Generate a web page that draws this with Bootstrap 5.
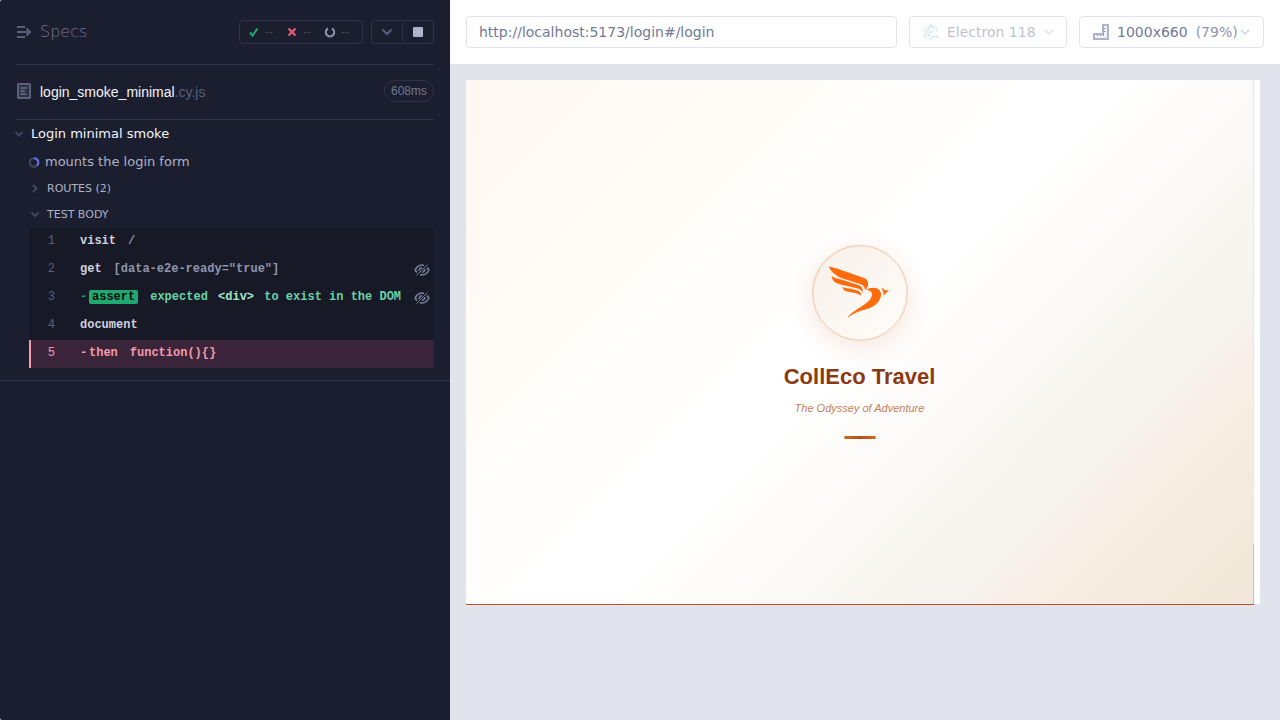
<!DOCTYPE html>
<html lang="en">
<head>
<meta charset="utf-8">
<meta name="viewport" content="width=device-width, initial-scale=1">
<title>login_smoke_minimal.cy.js</title>
<link href="https://cdn.jsdelivr.net/npm/bootstrap@5.3.0/dist/css/bootstrap.min.css" rel="stylesheet">
<style>
:root { --line: #2e3247; --ui: "DejaVu Sans", sans-serif; --alt: "Liberation Sans", sans-serif; --code: "Liberation Mono", monospace; }
body { font-family: var(--ui); background: #e1e3ed; color: #747994; }
button { font-family: inherit; }
svg { display: block; flex: none; }
.reporter { width: 450px; flex: none; background: #1b1e2e; border-top-left-radius: 2px; border-bottom-left-radius: 2px; }
.reporter-head { height: 65px; border-bottom: 1px solid var(--line); }
.specs-link { font-weight: 200; font-size: 16px; line-height: 24px; color: #747994; }
.stat-box { height: 24px; border: 1px solid var(--line); border-radius: 4px; font: 12px/22px var(--alt); color: #434861; margin: 0; list-style: none; padding: 0 10px 0 8px; gap: 10px; }
.stat-box li { display: flex; align-items: center; gap: 5px; width: 28px; }
.control-box { height: 24px; border: 1px solid var(--line); border-radius: 4px; width: 63px; }
.control-box button { flex: 1; background: none; border: 0; padding: 0; display: flex; align-items: center; justify-content: center; }
.control-box button + button { border-left: 1px solid var(--line); }
.spec-row { height: 55px; border-bottom: 1px solid var(--line); font: 14px/20px var(--alt); }
.spec-row a { color: #f3f4fa; }
.spec-row .ext { color: #5a5f7a; }
.duration { font-size: 12px; line-height: 20px; border: 1px solid var(--line); border-radius: 11px; padding: 0 6px; margin-bottom: 2px; color: #747994; }
.tree { padding-bottom: 12px; border-bottom: 1px solid var(--line); }
.tree-row { background: none; border: 0; padding: 0; display: flex; align-items: center; text-align: left; }
.suite { height: 28px; font-size: 13px; color: #f3f4fa; gap: 7px; padding-left: 14px; }
.test { height: 28px; font-size: 13px; line-height: 20px; color: #afb3c7; gap: 5px; padding-left: 28px; }
.section { height: 26px; font-size: 11px; color: #afb3c7; gap: 7px; padding-left: 30px; }
.commands { list-style: none; margin: 0 16px 0 29px; padding: 0; background: #171926; font: bold 12px/18px var(--code); color: #d0d2e0; }
.commands li { height: 28px; display: flex; align-items: start; padding: 4px 3px 0 0; }
.commands .num { width: 26px; text-align: right; font-weight: 400; color: #5a5f7a; margin-right: 25px; }
.commands .arg { color: #9095ad; margin-left: 12px; }
.commands svg { margin: 4px 1px 0 auto; }
.pass { color: #69d3a7; white-space: pre; }
.dash { width: 9px; color: #1fa971; }
.assert-tag { background: #1fa971; color: #08100d; border-radius: 2px; line-height: 14px; padding: 0 3px; margin: 2px 12px 0 0; }
.pass b { color: #a3e7cb; margin: 0 3px; }
.commands .failed { background: #3a243a; color: #f59aa9; border-left: 2px solid #f59aa9; }
.commands .failed .num { width: 24px; color: #f59aa9; }
.commands .failed .dash, .commands .failed .arg { color: #f59aa9; }
.runner { min-width: 0; }
.toolbar { height: 64px; background: #fff; padding: 16px; gap: 12px; }
.field { height: 32px; border: 1px solid #e1e3ed; border-radius: 4px; background: #fff; font-size: 14px; line-height: 20px; color: #747994; display: flex; align-items: center; white-space: nowrap; }
input.field { min-width: 0; padding: 0 12px; outline-color: #9aa2fc; }
.browser-pick { width: 158px; padding: 0 13px; gap: 8px; color: #bfc2d4; }
.size-pick { width: 185px; padding: 0 13px; }
.scale-text { color: #9095ad; }
.stage { margin: 16px 20px 0 16px; background: #fff; padding-right: 6px; }
.app-view { aspect-ratio: 788 / 524; border-right: 1px solid #ece6df; box-shadow: 0 1px #bd4f20; background: linear-gradient(135deg, #fff7f1 0%, #fffbf6 20%, #fff 45%, #fff 50%, #faf8f4 66%, #f6f2ed 78%, #f9efea 80%, #f7eee4 84%, #f2e8da 96%, #f2e7da 100%); position: relative; font-family: var(--alt); }
.scroll-edge { position: absolute; right: -1px; bottom: 0; width: 1px; height: 60px; background: #d9b79b; }
.emblem { width: 96px; height: 96px; border-radius: 50%; border: 1px solid #efc9ad; outline: 1px solid rgba(239, 201, 173, .3); outline-offset: -2px; background: linear-gradient(135deg, #f8f0e8, #fefdfb); box-shadow: 0 6px 25px rgba(194, 83, 30, .15); }
.brand { font-size: 22px; line-height: 28px; font-weight: 700; color: #8b3a12; margin: 22px 0 0; }
.tagline { font-size: 11px; line-height: 16px; font-style: italic; color: #c57f58; margin: 9px 0 20px; }
.loader-bar { width: 32px; height: 3px; border-radius: 2px; background: linear-gradient(90deg, #d2691e, #b4501c, #d2691e); }
</style>
</head>
<body>
<div class="d-flex min-vh-100">
  <aside class="reporter">
    <header class="reporter-head d-flex align-items-center mx-3">
      <a href="#" class="specs-link d-flex align-items-center gap-2 text-decoration-none me-auto">
        <svg width="16" height="16" viewBox="0 0 16 16" fill="none" stroke="#5a5f7a" stroke-width="2"><path d="M1 3h8M1 8h12M1 13h8"/><path d="M10.500 4.500L14 8l-3.500 3.500"/></svg>Specs</a>
      <ul class="stat-box d-flex me-2">
        <li><svg width="12" height="12" viewBox="0 0 12 12" fill="none" stroke="#1fa971" stroke-width="2"><path d="M2 6.500l2.500 3L9.500 2.500"/></svg>--</li>
        <li><svg width="12" height="12" viewBox="0 0 12 12" fill="none" stroke="#e45770" stroke-width="2.400"><path d="M2.500 2.500l7 7M9.500 2.500l-7 7"/></svg>--</li>
        <li><svg width="12" height="12" viewBox="0 0 12 12" fill="none" stroke="#9095ad" stroke-width="2"><path d="M4 2.500a4.200 4.200 0 1 0 4 0"/></svg>--</li>
      </ul>
      <div class="control-box d-flex">
        <button type="button" aria-label="Options"><svg width="12" height="12" viewBox="0 0 12 12" fill="none" stroke="#5a5f7a" stroke-width="2"><path d="M1.500 3.500L6 8l4.500-4.500"/></svg></button>
        <button type="button" aria-label="Stop"><svg width="10" height="10" viewBox="0 0 10 10"><rect width="10" height="10" rx="1" fill="#afb3c7"/></svg></button>
      </div>
    </header>
    <div class="spec-row d-flex align-items-center mx-3">
      <svg class="me-2 mb-1" width="16" height="18" viewBox="0 0 16 18" fill="none" stroke="#5a5f7a" stroke-width="2"><rect x="2" y="3" width="12" height="14" rx=".5" fill="#2e3247"/><path d="M4.500 7H11M4.500 10H9M4.500 13H10.500" stroke-width="1.800"/></svg>
      <a href="#" class="text-decoration-none me-auto">login_smoke_minimal<span class="ext">.cy.js</span></a>
      <span class="duration">608ms</span>
    </div>
    <div class="tree">
      <button type="button" class="tree-row suite"><svg width="10" height="10" viewBox="0 0 10 10" fill="none" stroke="#434861" stroke-width="2"><path d="M1.500 3L5 6.500 8.500 3"/></svg>Login minimal smoke</button>
      <button type="button" class="tree-row test"><svg width="12" height="12" viewBox="0 0 12 12" fill="none" stroke-width="2"><circle cx="6" cy="6.500" r="4.200" stroke="#434861"/><path d="M6 2.300a4.200 4.200 0 0 1 3 7.200" stroke="#6470f3"/></svg>mounts the login form</button>
      <button type="button" class="tree-row section"><svg width="10" height="10" viewBox="0 0 10 10" fill="none" stroke="#434861" stroke-width="2"><path d="M3 1L6.500 4.500 3 8"/></svg>ROUTES (2)</button>
      <button type="button" class="tree-row section"><svg width="10" height="10" viewBox="0 0 10 10" fill="none" stroke="#434861" stroke-width="2"><path d="M1.500 2.500L5 6 8.500 2.500"/></svg>TEST BODY</button>
      <ol class="commands">
        <li><span class="num">1</span>visit<span class="arg">/</span></li>
        <li><span class="num">2</span>get<span class="arg">[data-e2e-ready="true"]</span>
          <svg width="16" height="12" viewBox="0 0 16 12" fill="none" stroke="#747994" stroke-width="1.800"><path d="M10 1.300C6 .3 2.600 2.500 1.200 6c.5 1 1 1.800 1.800 2.500M6 10.700C10 11.700 13.400 9.500 14.800 6c-.5-1-1-1.800-1.800-2.500"/><path d="M5.300 7A2.600 2.600 0 0 1 8 3.800M10.700 5A2.600 2.600 0 0 1 8 8.200"/><path d="M2.500 11.500L13.500 .5" stroke-width="1"/></svg></li>
        <li><span class="num">3</span><span class="dash">-</span><span class="assert-tag">assert</span><span class="pass">expected <b>&lt;div&gt;</b> to exist in the DOM</span>
          <svg width="16" height="12" viewBox="0 0 16 12" fill="none" stroke="#747994" stroke-width="1.800"><path d="M10 1.300C6 .3 2.600 2.500 1.200 6c.5 1 1 1.800 1.800 2.500M6 10.700C10 11.700 13.400 9.500 14.800 6c-.5-1-1-1.800-1.800-2.500"/><path d="M5.300 7A2.600 2.600 0 0 1 8 3.800M10.700 5A2.600 2.600 0 0 1 8 8.200"/><path d="M2.500 11.500L13.500 .5" stroke-width="1"/></svg></li>
        <li><span class="num">4</span>document</li>
        <li class="failed"><span class="num">5</span><span class="dash">-</span>then<span class="arg">function(){}</span></li>
      </ol>
    </div>
  </aside>
  <main class="runner flex-grow-1">
    <div class="toolbar d-flex">
      <input class="field flex-grow-1" type="text" aria-label="Page address" value="http://localhost:5173/login#/login">
      <button type="button" class="field browser-pick flex-shrink-0">
        <svg width="16" height="16" viewBox="0 0 16 16" fill="none" stroke="#c3e3e2" stroke-width=".8"><path d="M2 12.500C.5 11 2 8 5 5.500S12 2 13.500 4c.6.900.2 2.200-.6 3.500M14 12.500c-2 1-6 0-9-2.200S.8 5.200 2 4c.8-.7 2.200-.7 4-.3M10.300 12.500C9.700 14.300 8.900 15.300 8 15.300c-1.700 0-3-3.200-3-7.300S6.300.7 8 .7c1.500 0 2.600 2.300 2.900 5.600"/><circle cx="8" cy="8" r="1" fill="#b4d8d8" stroke="none"/><circle cx="2.300" cy="12.700" r=".8"/><circle cx="14" cy="12.500" r=".8"/><circle cx="8" cy="1.500" r=".8"/></svg>
        Electron 118
        <svg class="ms-auto" width="10" height="10" viewBox="0 0 10 10" fill="none" stroke="#e1e3ed" stroke-width="1.500"><path d="M1 3l4 4 4-4"/></svg>
      </button>
      <button type="button" class="field size-pick flex-shrink-0">
        <svg class="me-2" width="16" height="16" viewBox="0 0 16 16" fill="#f3f4fa" stroke="#afb3c7" stroke-width="2"><path d="M10 1h5v14H1v-5h9z"/><path d="M4.500 10v2M7.500 10v2M10.500 10v2M10.500 7.500h2M10.500 4.500h2" stroke-width="1" stroke="#9095ad"/></svg>
        1000x660<span class="ms-2 scale-text">(79%)</span>
        <svg class="ms-auto" width="10" height="10" viewBox="0 0 10 10" fill="none" stroke="#d0d2e0" stroke-width="1.500"><path d="M1 3l4 4 4-4"/></svg>
      </button>
    </div>
    <div class="stage">
      <div class="app-view d-flex flex-column align-items-center justify-content-center">
        <div class="emblem d-flex align-items-center justify-content-center">
          <svg width="92" height="92" viewBox="0 0 92 92" fill="#ff6b0a">
            <path d="M15 19.300C18 20.500 21 21 24.300 22L49.300 30.700C53 32 54.300 34 54 37 54 39.500 53 41.500 51.300 43 50.500 40 49.500 38 46 37L32.700 32.700C27 31 23 29.500 21 27.300 18 25 15.500 22.500 15 19.300z"/>
            <path d="M17.700 29C20 31 24 31.800 27.700 32.700L44.300 38C48 39.300 49.500 42 48.300 45.800 47.500 43.500 46.500 42.300 44 41.600L30 38.200C23 37 18 35 17.700 29z"/>
            <path d="M28.300 40C31 41.300 34 41.300 37.700 42L43.500 43.600C46.500 44.800 47.500 46.500 46.500 48.800 45 47.300 43.500 46.700 41 46L34.500 44.800C31 44 29 43 28.300 40z"/>
            <path d="M52.300 43C54 41.500 56.500 40.700 59.300 40.700 63 40.700 66 42.500 67 46 67.500 50 65.500 54.500 61 58 57 61 53 61.800 49.300 63 43 65 38 67 33.700 70.700 36 66.500 42 63 47.700 59.300 53 56 57.500 52 58 48 58.200 45 56 43 52.300 43z"/>
            <path d="M67.600 41.500l1.400-.3 1.500 2 4.500.1-5.500 5.200c.3-2.500-.4-4.500-1.900-7z"/>
          </svg>
        </div>
        <h1 class="brand">CollEco Travel</h1>
        <p class="tagline">The Odyssey of Adventure</p>
        <div class="loader-bar"></div>
        <div class="scroll-edge"></div>
      </div>
    </div>
  </main>
</div>
<script src="https://cdn.jsdelivr.net/npm/bootstrap@5.3.0/dist/js/bootstrap.bundle.min.js"></script>
</body>
</html>
